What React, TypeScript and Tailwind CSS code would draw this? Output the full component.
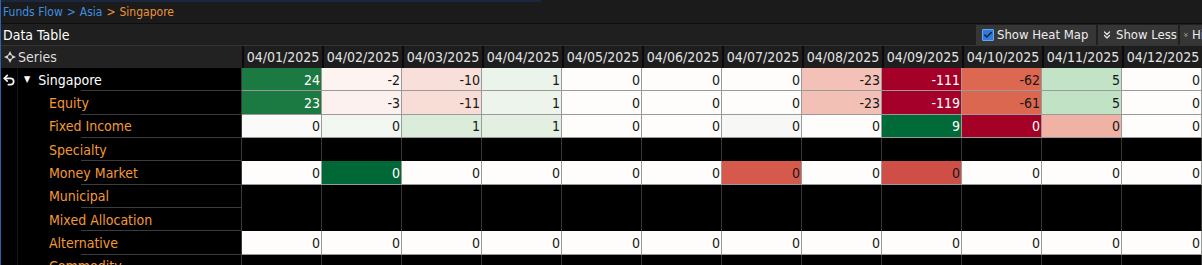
import { Undo2, ChevronsDown, Check } from 'lucide-react'

type Cell = { v: string; bg: string; fg?: string }

const dates = [
  '04/01/2025',
  '04/02/2025',
  '04/03/2025',
  '04/04/2025',
  '04/05/2025',
  '04/06/2025',
  '04/07/2025',
  '04/08/2025',
  '04/09/2025',
  '04/10/2025',
  '04/11/2025',
  '04/12/2025',
  '04/13/2025',
]

const W = 'bg-[#fffdfb]'
const DARK = 'text-[#161616]'
const LIGHT = 'text-white'

const c = (v: string, bg: string = W, fg: string = DARK): Cell => ({ v, bg, fg })
const zeros = (n: number) => Array.from({ length: n }, () => c('0'))

interface Row {
  label: string
  top?: boolean
  cells?: Cell[]
}

const rows: Row[] = [
  {
    label: 'Singapore',
    top: true,
    cells: [
      c('24', 'bg-[#1b7a41]', LIGHT),
      c('-2', 'bg-[#fdf4f1]'),
      c('-10', 'bg-[#f9dfda]'),
      c('1', 'bg-[#ebf4ea]'),
      c('0'),
      c('0'),
      c('0'),
      c('-23', 'bg-[#f3c1b7]'),
      c('-111', 'bg-[#a50128]', LIGHT),
      c('-62', 'bg-[#dc6852]'),
      c('5', 'bg-[#c3e3c7]'),
      c('0'),
      c('0'),
    ],
  },
  {
    label: 'Equity',
    cells: [
      c('23', 'bg-[#1b7a41]', LIGHT),
      c('-3', 'bg-[#fcf1ee]'),
      c('-11', 'bg-[#f8dcd6]'),
      c('1', 'bg-[#ecf4eb]'),
      c('0'),
      c('0'),
      c('0'),
      c('-23', 'bg-[#f3c0b6]'),
      c('-119', 'bg-[#a5002a]', LIGHT),
      c('-61', 'bg-[#dc6751]'),
      c('5', 'bg-[#c1e2c5]'),
      c('0'),
      c('0'),
    ],
  },
  {
    label: 'Fixed Income',
    cells: [
      c('0', 'bg-[#fafaf9]'),
      c('0', 'bg-[#f2f7f1]'),
      c('1', 'bg-[#dcecda]'),
      c('1', 'bg-[#e3efe1]'),
      c('0'),
      c('0'),
      c('0', 'bg-[#f7f7f5]'),
      c('0'),
      c('9', 'bg-[#006a38]', LIGHT),
      c('0', 'bg-[#a50026]', LIGHT),
      c('0', 'bg-[#efb2a5]'),
      c('0'),
      c('0'),
    ],
  },
  { label: 'Specialty' },
  {
    label: 'Money Market',
    cells: [
      c('0'),
      c('0', 'bg-[#006837]', LIGHT),
      c('0'),
      c('0'),
      c('0'),
      c('0'),
      c('0', 'bg-[#d65a4c]'),
      c('0'),
      c('0', 'bg-[#cf4f46]'),
      c('0'),
      c('0'),
      c('0'),
      c('0'),
    ],
  },
  { label: 'Municipal' },
  { label: 'Mixed Allocation' },
  { label: 'Alternative', cells: zeros(13) },
  { label: 'Commodity' },
]

function SeriesIcon() {
  return (
    <svg width="12" height="12" viewBox="0 0 12 12">
      <path d="M6 0 L8 4 L12 6 L8 8 L6 12 L4 8 L0 6 L4 4 Z" fill="#d4d4d4" />
      <circle cx="6" cy="6" r="2" fill="#222222" />
    </svg>
  )
}

function DataRow({ row }: { row: Row }) {
  return (
    <div className="flex h-[23.33px] shrink-0">
      <div className="flex w-[241px] shrink-0 border-r border-[#3a3a3a]">
        <div className="flex w-[17px] shrink-0 items-center justify-center border-r border-[#141414]">
          {row.top && <Undo2 size={14} strokeWidth={3} color="#f2f2f2" />}
        </div>
        <div className="flex flex-1 flex-col">
          <div className="flex flex-1 items-center pt-[1px]">
            {row.top ? (
              <>
                <span className="ml-[6px] text-[9px] text-white">▼</span>
                <span className="ml-[8px] text-white">{row.label}</span>
              </>
            ) : (
              <span className="ml-[31px] text-[#f39a34]">{row.label}</span>
            )}
          </div>
          <div className="ml-[63px] h-px bg-[#3c3c3c]" />
        </div>
      </div>
      {row.cells
        ? row.cells.map((cell, i) => (
            <div
              key={i}
              className={`flex w-[80px] shrink-0 items-center justify-end border-r border-b border-[#9a9a9a] pr-[1px] pt-[1px] ${cell.bg} ${cell.fg}`}
            >
              {cell.v}
            </div>
          ))
        : dates.map((d) => (
            <div key={d} className="w-[80px] shrink-0 border-r border-[#363636]" />
          ))}
    </div>
  )
}

export default function App() {
  return (
    <div className="h-[265px] w-[1202px] overflow-hidden border-l border-[#2c63ad] bg-black font-['DejaVu_Sans_Condensed','Liberation_Sans',sans-serif] text-[14px] leading-none">
      {/* breadcrumb */}
      <div className="relative flex h-[24px] items-center border-b border-[#0e0e0e] bg-[#1b1b1b] pl-[2px] text-[12px]">
        <div className="absolute left-0 top-0 h-[2px] w-[540px] bg-[#1a2740]" />
        <span className="text-[#3f8fe0]">Funds Flow</span>
        <span className="mx-[4px] text-[#3f8fe0]">&gt;</span>
        <span className="text-[#3f8fe0]">Asia</span>
        <span className="mx-[4px] text-[#ee9238]">&gt;</span>
        <span className="text-[#ee9238]">Singapore</span>
      </div>

      {/* title + toolbar */}
      <div className="flex h-[22px] items-center border-b border-[#343434] bg-[#1f1f1f]">
        <span className="pl-[2px] text-white">Data Table</span>
        <div className="ml-auto flex w-[226px] shrink-0 gap-[2px] overflow-hidden whitespace-nowrap text-[13px]">
          <div className="flex h-[20px] w-[120px] shrink-0 items-center bg-[#363636] pl-[6px]">
            <span className="flex h-[12px] w-[12px] items-center justify-center rounded-[1px] border border-[#6aa6f0] bg-[#2b7be0]">
              <Check size={10} strokeWidth={3.5} color="#0b1b33" />
            </span>
            <span className="ml-[3px] text-[#ececec]">Show Heat Map</span>
          </div>
          <div className="flex h-[20px] w-[80px] shrink-0 items-center bg-[#363636] pl-[3px]">
            <ChevronsDown size={12} strokeWidth={2.5} color="#e6e6e6" />
            <span className="ml-[3px] text-[#ececec]">Show Less</span>
          </div>
          <div className="flex h-[20px] w-[80px] shrink-0 items-center bg-[#363636] pl-[3px]">
            <ChevronsDown size={12} strokeWidth={2.5} color="#e6e6e6" />
            <span className="ml-[3px] text-[#ececec]">Hide Empty</span>
          </div>
        </div>
      </div>

      {/* header */}
      <div className="flex h-[22px] whitespace-nowrap bg-[#0a0a0a]">
        <div className="flex w-[241px] shrink-0 items-center bg-[#222222]">
          <div className="flex w-[17px] shrink-0 items-center justify-center">
            <SeriesIcon />
          </div>
          <span className="text-[#dedede]">Series</span>
        </div>
        {dates.map((d) => (
          <div
            key={d}
            className="flex w-[80px] shrink-0 items-center justify-center border-l-2 border-[#0a0a0a] bg-[#1e1e1e] text-[#e2e2e2]"
          >
            {d}
          </div>
        ))}
      </div>

      {rows.map((r) => (
        <DataRow key={r.label} row={r} />
      ))}
    </div>
  )
}
